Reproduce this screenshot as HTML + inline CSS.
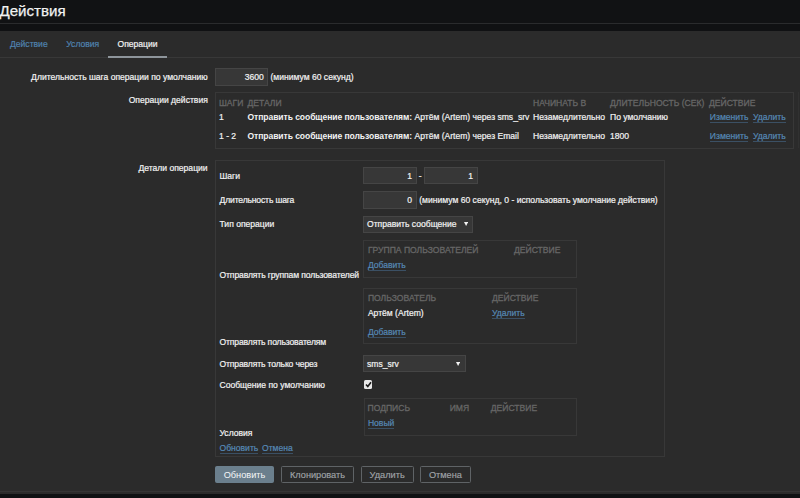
<!DOCTYPE html>
<html><head><meta charset="utf-8">
<style>
*{box-sizing:border-box;margin:0;padding:0}
html,body{width:800px;height:498px;overflow:hidden;background:#0f1113;font-family:"Liberation Sans",sans-serif;color:#f2f2f2}
.abs{position:absolute}
.t{position:absolute;white-space:nowrap;font-size:8.57px;line-height:10px;-webkit-text-stroke:0.2px}
.r{text-align:right}
.lnk{color:#5689b6}
.u{border-bottom:1px solid #3b5064}
.h{color:#666;-webkit-text-stroke:0.3px #666}
.box{position:absolute;border:1px solid #383838}
.inp{position:absolute;background:#373737;border:1px solid #454545}
.btn{position:absolute;border:1px solid #5f6366;border-radius:1.5px;color:#a0a4a8;font-size:9.2px;line-height:16px;text-align:center;white-space:nowrap;-webkit-text-stroke:0.15px}
</style></head><body>
<!-- header -->
<div class="abs" style="left:0;top:0;width:800px;height:23px;background:#111214"></div>
<div class="abs" style="left:0;top:23px;width:800px;height:1px;background:#2a2b2d"></div>
<div class="abs" style="left:0;top:24px;width:800px;height:7px;background:#101113"></div>
<div class="t" style="left:-0.5px;top:1.1px;font-size:15.1px;line-height:20px;-webkit-text-stroke:0.25px #f2f2f2">Действия</div>
<!-- container -->
<div class="abs" style="left:0;top:31px;width:800px;height:463px;background:#2b2b2b"></div>
<div class="abs" style="left:0;top:57px;width:800px;height:1px;background:#383838"></div>
<div class="abs" style="left:0;top:491px;width:800px;height:1px;background:#353535"></div>
<!-- tabs -->
<div class="t lnk" style="left:10px;top:39px;color:#5083b0">Действие</div>
<div class="t lnk" style="left:66.25px;top:39px;color:#5083b0">Условия</div>
<div class="t" style="left:117.5px;top:39px">Операции</div>
<div class="abs" style="left:108px;top:55.5px;width:59px;height:2.2px;background:#8e959b"></div>

<!-- row: step duration -->
<div class="t r" style="right:592.4px;top:71.6px">Длительность шага операции по умолчанию</div>
<div class="inp" style="left:215px;top:68px;width:53.25px;height:17.5px"></div>
<div class="t r" style="right:536.25px;top:72px">3600</div>
<div class="t" style="left:270.5px;top:71.8px">(минимум 60 секунд)</div>

<!-- operations -->
<div class="t r" style="right:592.2px;top:94.9px">Операции действия</div>
<div class="box" style="left:215px;top:92px;width:579px;height:57px"></div>
<div class="t h" style="left:219px;top:97.6px">ШАГИ</div>
<div class="t h" style="left:247.5px;top:97.6px">ДЕТАЛИ</div>
<div class="t h" style="left:533px;top:97.6px">НАЧИНАТЬ В</div>
<div class="t h" style="left:610px;top:97.6px">ДЛИТЕЛЬНОСТЬ (СЕК)</div>
<div class="t h" style="left:709px;top:97.6px">ДЕЙСТВИЕ</div>

<div class="t" style="left:219px;top:112px">1</div>
<div class="t" style="left:247.5px;top:112px"><b style="-webkit-text-stroke:0;letter-spacing:-0.075px">Отправить сообщение пользователям:</b> Артём (Artem) через sms_srv</div>
<div class="t" style="left:533px;top:112px">Незамедлительно</div>
<div class="t" style="left:610px;top:112px">По умолчанию</div>
<div class="t lnk" style="left:709.8px;top:112px"><span class="u">Изменить</span></div>
<div class="t lnk" style="left:753px;top:112px"><span class="u">Удалить</span></div>

<div class="t" style="left:219px;top:130.9px">1 - 2</div>
<div class="t" style="left:247.5px;top:130.9px"><b style="-webkit-text-stroke:0;letter-spacing:-0.075px">Отправить сообщение пользователям:</b> Артём (Artem) через Email</div>
<div class="t" style="left:533px;top:130.9px">Незамедлительно</div>
<div class="t" style="left:610px;top:130.9px">1800</div>
<div class="t lnk" style="left:709.8px;top:130.9px"><span class="u">Изменить</span></div>
<div class="t lnk" style="left:753px;top:130.9px"><span class="u">Удалить</span></div>

<div class="abs" style="left:797.5px;top:91.5px;width:1px;height:56.5px;background:#313131"></div>
<!-- details -->
<div class="t r" style="right:592.4px;top:163.2px">Детали операции</div>
<div class="box" style="left:215px;top:160px;width:449.8px;height:297.2px"></div>

<div class="t" style="left:219.5px;top:171px">Шаги</div>
<div class="inp" style="left:363.25px;top:167px;width:53.75px;height:17.25px"></div>
<div class="t r" style="right:388px;top:171px">1</div>
<div class="t" style="left:418.75px;top:171px">-</div>
<div class="inp" style="left:423.75px;top:167px;width:54.25px;height:17.25px"></div>
<div class="t r" style="right:327px;top:171px">1</div>

<div class="t" style="left:219.5px;top:195px;letter-spacing:-0.15px">Длительность шага</div>
<div class="inp" style="left:363.25px;top:191.25px;width:53.75px;height:17.5px"></div>
<div class="t r" style="right:388px;top:195px">0</div>
<div class="t" style="left:419.25px;top:195px">(минимум 60 секунд, 0 - использовать умолчание действия)</div>

<div class="t" style="left:219.5px;top:219px">Тип операции</div>
<div class="inp" style="left:363.25px;top:215.5px;width:109.25px;height:17px"></div>
<div class="t" style="left:367px;top:219px">Отправить сообщение</div>
<svg class="abs" style="left:463.6px;top:221.8px" width="4.2" height="4" viewBox="0 0 4.2 4"><path d="M0 0H4.2L2.1 4Z" fill="#f2f2f2"/></svg>

<div class="box" style="left:363.3px;top:240px;width:214px;height:38px"></div>
<div class="t h" style="left:367.9px;top:244.5px">ГРУППА ПОЛЬЗОВАТЕЛЕЙ</div>
<div class="t h" style="left:514px;top:244.5px">ДЕЙСТВИЕ</div>
<div class="t lnk" style="left:367.9px;top:260px"><span class="u">Добавить</span></div>
<div class="t" style="left:219.5px;top:270px;letter-spacing:-0.11px">Отправлять группам пользователей</div>

<div class="box" style="left:363.3px;top:288.3px;width:214px;height:55.5px"></div>
<div class="t h" style="left:367.9px;top:293px">ПОЛЬЗОВАТЕЛЬ</div>
<div class="t h" style="left:492px;top:293px">ДЕЙСТВИЕ</div>
<div class="t" style="left:367.9px;top:307.8px">Артём (Artem)</div>
<div class="t lnk" style="left:492px;top:307.8px"><span class="u">Удалить</span></div>
<div class="t lnk" style="left:367.9px;top:327px"><span class="u">Добавить</span></div>
<div class="t" style="left:219.5px;top:336.8px;letter-spacing:-0.125px">Отправлять пользователям</div>

<div class="t" style="left:219.5px;top:359px;letter-spacing:-0.13px">Отправлять только через</div>
<div class="inp" style="left:363.25px;top:354.75px;width:102.5px;height:17.5px"></div>
<div class="t" style="left:367px;top:359px">sms_srv</div>
<svg class="abs" style="left:456.3px;top:361.8px" width="4.2" height="4" viewBox="0 0 4.2 4"><path d="M0 0H4.2L2.1 4Z" fill="#f2f2f2"/></svg>

<div class="t" style="left:219.5px;top:379.6px">Сообщение по умолчанию</div>
<div class="abs" style="left:363.5px;top:380.25px;width:8.75px;height:8.5px;background:#e8e8e8;border-radius:1.5px"></div>
<svg class="abs" style="left:363.5px;top:380.25px" width="9" height="9" viewBox="0 0 9 9"><path d="M2 4.5 L3.8 6.5 L7 2.2" stroke="#1a1a1a" stroke-width="1.6" fill="none"/></svg>

<div class="box" style="left:363.5px;top:398px;width:213.5px;height:38px"></div>
<div class="t h" style="left:367.5px;top:402.5px">ПОДПИСЬ</div>
<div class="t h" style="left:449.7px;top:402.5px">ИМЯ</div>
<div class="t h" style="left:490.8px;top:402.5px">ДЕЙСТВИЕ</div>
<div class="t lnk" style="left:367.9px;top:417.5px"><span class="u">Новый</span></div>
<div class="t" style="left:219.5px;top:428.25px">Условия</div>
<div class="t lnk" style="left:219.5px;top:443.25px"><span class="u">Обновить</span></div>
<div class="t lnk" style="left:262px;top:443.25px"><span class="u">Отмена</span></div>

<!-- buttons -->
<div class="btn" style="left:215px;top:465.6px;width:59px;height:17.1px;background:#6b7f8d;border-color:#6b7f8d;color:#f4f6f8;-webkit-text-stroke:0">Обновить</div>
<div class="btn" style="left:281px;top:465.6px;width:73px;height:17.1px">Клонировать</div>
<div class="btn" style="left:360.5px;top:465.6px;width:53.3px;height:17.1px">Удалить</div>
<div class="btn" style="left:420px;top:465.6px;width:50.8px;height:17.1px">Отмена</div>
</body></html>
